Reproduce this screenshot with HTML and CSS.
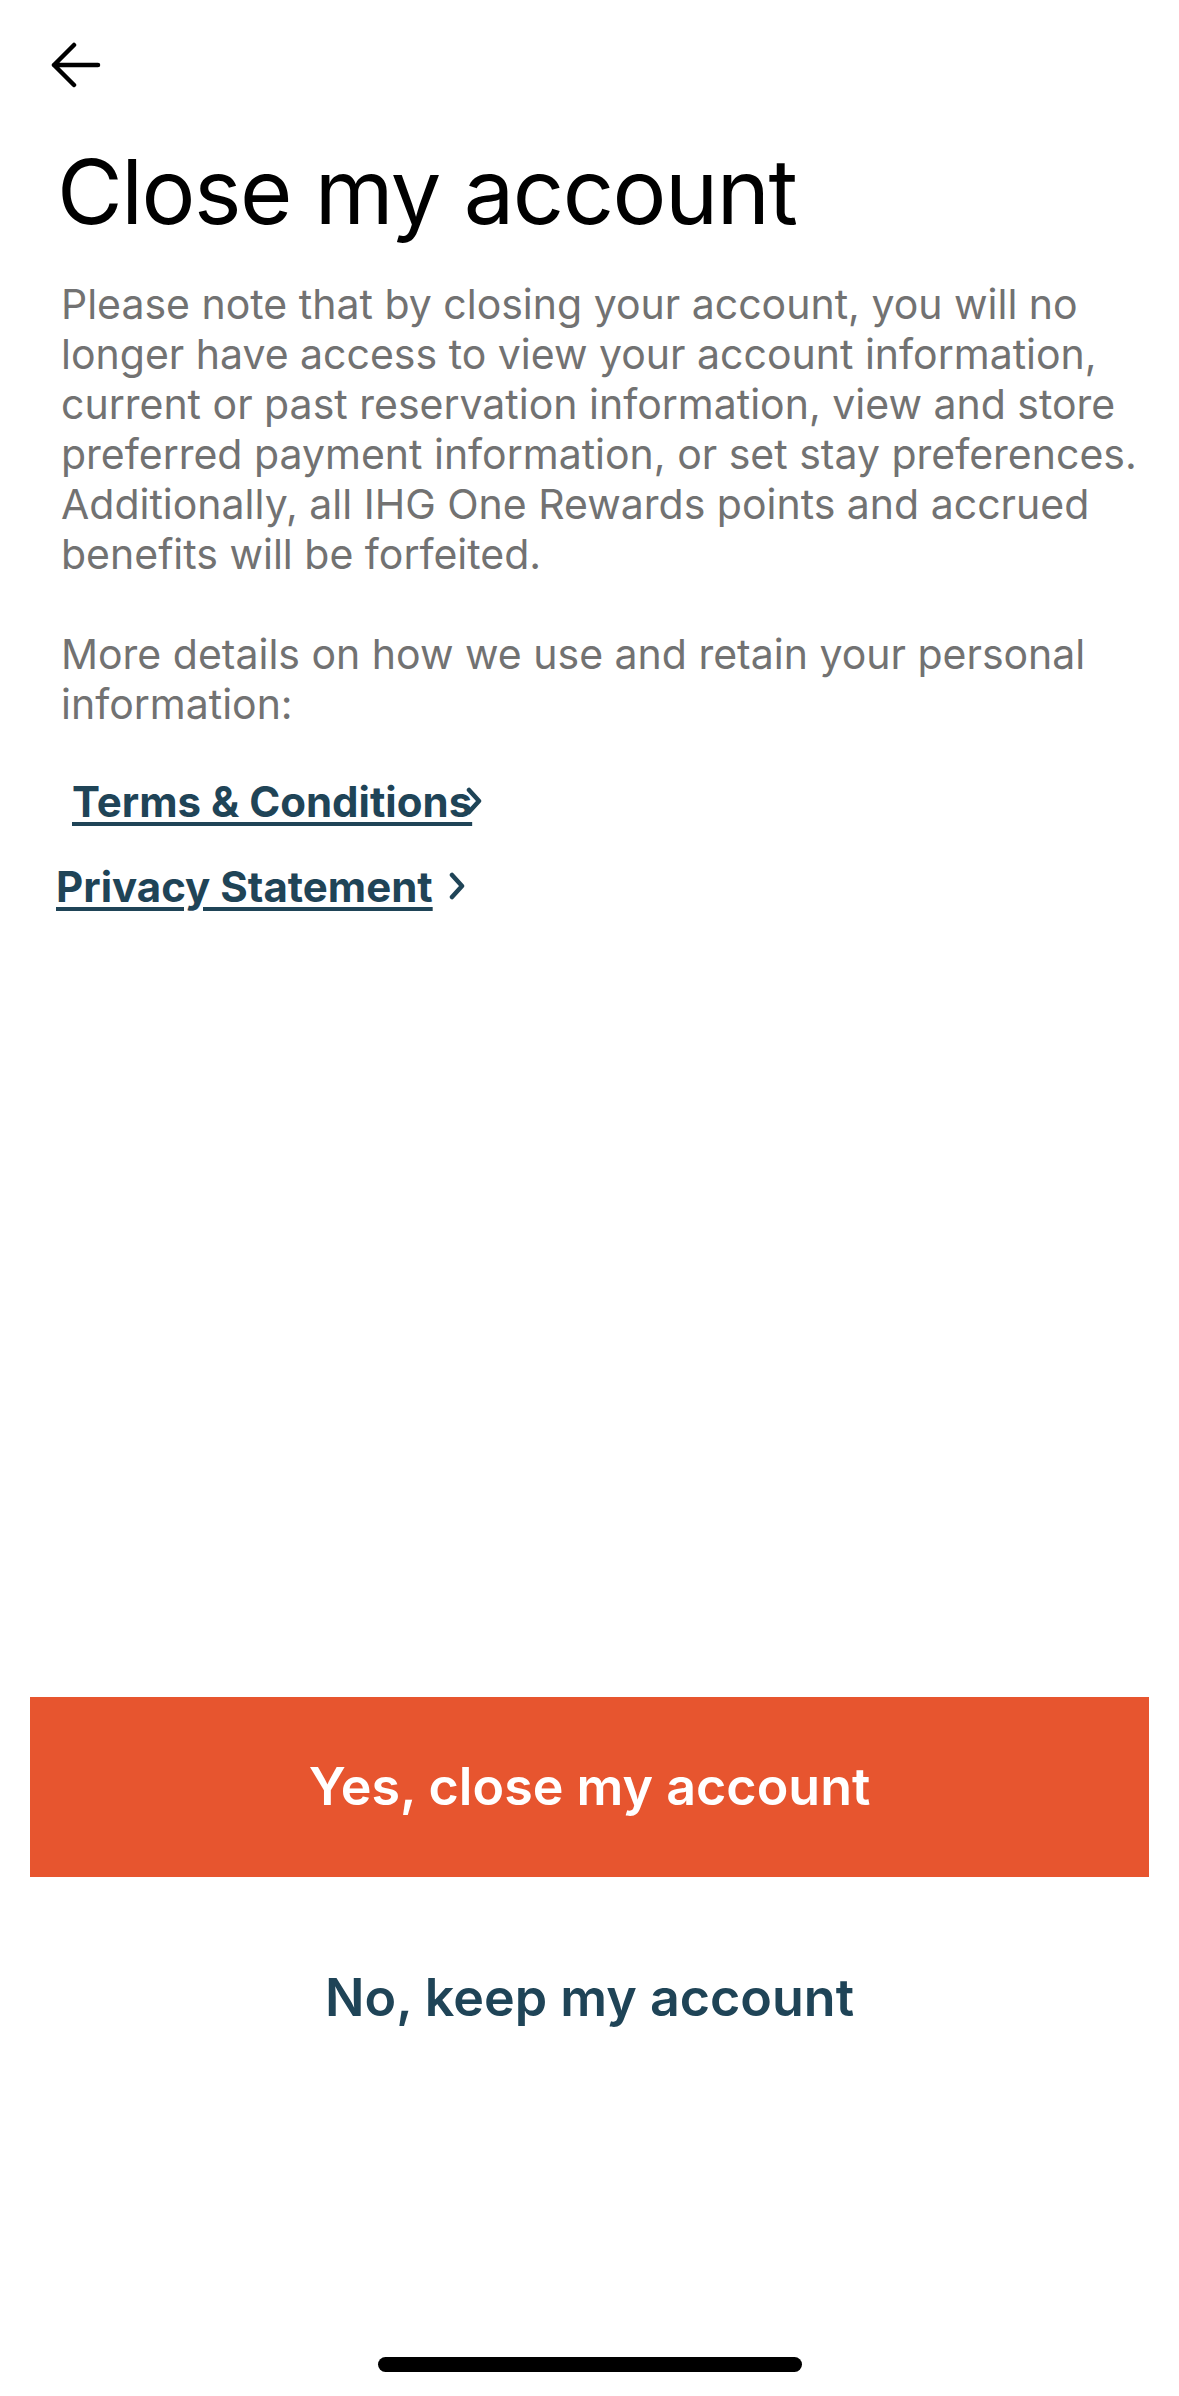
FILE: index.html
```html
<!DOCTYPE html>
<html lang="en">
<head>
<meta charset="utf-8">
<title>Close my account</title>
<link rel="stylesheet" href="styles.css">
</head>
<body>
<div class="screen">
  <header class="top-bar">
    <svg class="back-icon" width="50" height="46" viewBox="0 0 50 46" aria-label="Back">
      <path d="M3 23 H47 M3 23 L23 3 M3 23 L23 43" fill="none" stroke="#000" stroke-width="4.5" stroke-linecap="round" stroke-linejoin="round"/>
    </svg>
  </header>

  <main class="content">
    <h1 class="title">Close my account</h1>
    <div class="desc">
      <p>Please note that by closing your account, you will no<br>longer have access to view your account information,<br>current or past reservation information, view and store<br>preferred payment information, or set stay preferences.<br>Additionally, all IHG One Rewards points and accrued<br>benefits will be forfeited.</p>
      <p>More details on how we use and retain your personal<br>information:</p>
    </div>
    <div class="links">
      <a class="link link-terms" href="#"><span class="link-text">Terms &amp; Conditions</span><svg class="chev" width="16" height="28" viewBox="0 0 16 28"><path d="M3 3 L13 14 L3 25" fill="none" stroke="#1f4457" stroke-width="4.5" stroke-linecap="round" stroke-linejoin="round"/></svg></a>
      <a class="link link-privacy" href="#"><span class="link-text">Privacy Statement</span><svg class="chev" width="16" height="28" viewBox="0 0 16 28"><path d="M3 3 L13 14 L3 25" fill="none" stroke="#1f4457" stroke-width="4.5" stroke-linecap="round" stroke-linejoin="round"/></svg></a>
    </div>
  </main>

  <footer class="actions">
    <button class="btn btn-primary" type="button">Yes, close my account</button>
    <button class="btn btn-secondary" type="button">No, keep my account</button>
    <div class="home-indicator"></div>
  </footer>
</div>
</body>
</html>
```

FILE: styles.css
```css
* {
  box-sizing: border-box;
}

html, body {
  margin: 0;
  padding: 0;
  background: #ffffff;
}

body {
  font-family: "Inter", "Liberation Sans", Arial, sans-serif;
  color: #000;
}

.screen {
  width: 1179px;
  height: 2396px;
  display: flex;
  flex-direction: column;
  background: #fff;
  overflow: hidden;
}

.top-bar {
  height: 130px;
  display: flex;
  align-items: center;
  padding-left: 51px;
}

.back-icon {
  display: block;
}

.content {
  display: flex;
  flex-direction: column;
}

.title {
  margin: 7px 0 0;
  padding-left: 57px;
  font-size: 90px;
  line-height: 110px;
  font-weight: 400;
  letter-spacing: -1.5px;
  color: #000;
}

.desc {
  margin-top: 32px;
  padding-left: 61px;
  font-size: 41px;
  line-height: 50px;
  color: #727272;
  white-space: nowrap;
}

.desc p {
  margin: 0;
}

.desc p + p {
  margin-top: 50px;
}

.links {
  margin-top: 44px;
  display: flex;
  flex-direction: column;
  gap: 29px;
}

.link {
  display: inline-flex;
  align-items: center;
  align-self: flex-start;
  height: 56px;
  font-size: 42px;
  font-weight: 700;
  color: #1f4457;
  text-decoration: none;
}

.link-text {
  text-decoration: underline;
  text-decoration-thickness: 4px;
  text-underline-offset: 5px;
}

.link-terms {
  padding-left: 72px;
}

.link-terms .chev {
  margin-left: -6px;
}

.link-privacy {
  padding-left: 56px;
}

.link-privacy .chev {
  margin-left: 16px;
}

.chev {
  display: block;
}

.actions {
  margin-top: auto;
  display: flex;
  flex-direction: column;
  align-items: center;
  padding-bottom: 24px;
}

.btn {
  border: 0;
  font-family: "Inter", "Liberation Sans", Arial, sans-serif;
  font-weight: 600;
  font-size: 52px;
  cursor: pointer;
  padding: 0;
}

.btn-primary {
  width: 1119px;
  height: 180px;
  line-height: 180px;
  background: #e7552f;
  color: #fff;
}

.btn-secondary {
  margin-top: 61px;
  width: 1119px;
  height: 120px;
  line-height: 120px;
  background: transparent;
  color: #1f4457;
}

.home-indicator {
  margin-top: 299px;
  width: 424px;
  height: 15px;
  border-radius: 8px;
  background: #000;
}
```
